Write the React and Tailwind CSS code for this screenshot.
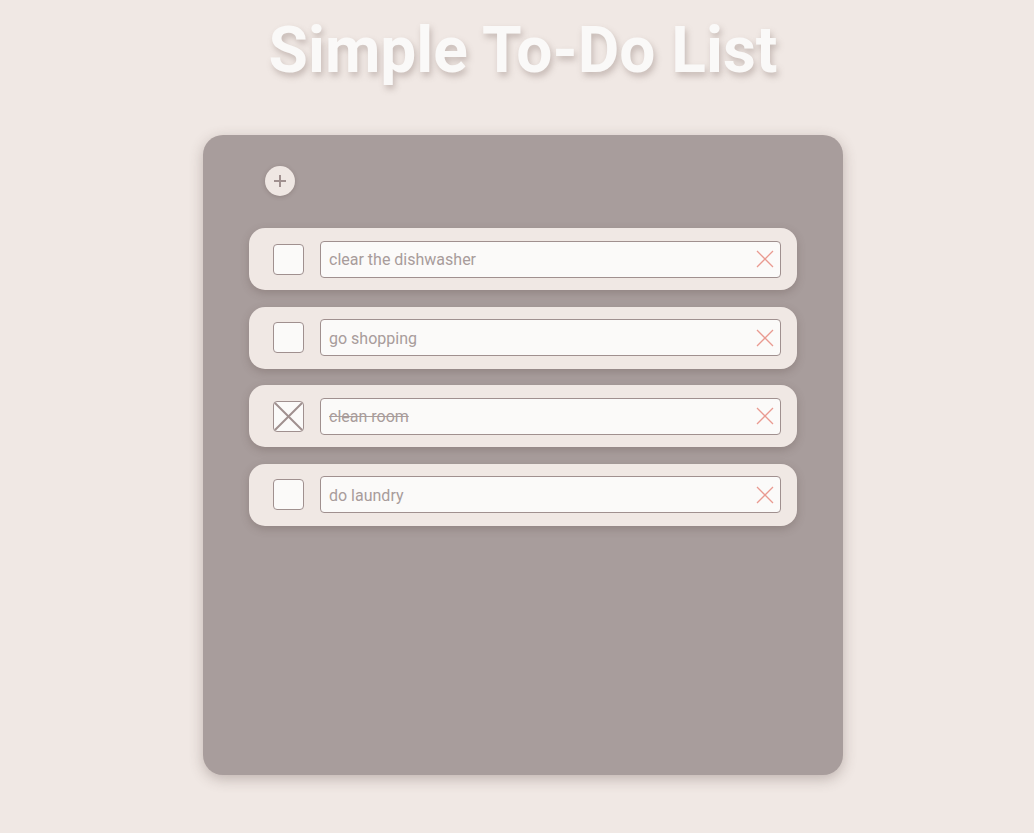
import React, { useState } from "react";

const initial = [
  { id: 1, text: "clear the dishwasher", done: false },
  { id: 2, text: "go shopping", done: false },
  { id: 3, text: "clean room", done: true },
  { id: 4, text: "do laundry", done: false },
];

function XIcon({ className }) {
  return (
    <svg viewBox="0 0 18 18" width="18" height="18" className={className}>
      <path d="M1 1L17 17M17 1L1 17" stroke="currentColor" strokeWidth="1.3" fill="none" />
    </svg>
  );
}

export default function App() {
  const [todos, setTodos] = useState(initial);
  const toggle = (id) => setTodos(todos.map((t) => (t.id === id ? { ...t, done: !t.done } : t)));
  const remove = (id) => setTodos(todos.filter((t) => t.id !== id));

  return (
    <div
      className="min-h-[833px] w-full bg-[#f0e8e4] pl-[12px] flex flex-col items-center"
      style={{ fontFamily: "Roboto, 'Noto Sans', sans-serif" }}
    >
      <h1 className="mt-[19px] text-[64px] leading-none font-bold text-[#faf9f8] [text-shadow:2px_4px_6px_rgba(120,100,95,0.35)]">
        Simple To-Do List
      </h1>
      <div className="mt-[52px] w-[640px] h-[640px] rounded-[20px] bg-[#a89d9c] shadow-[0_4px_14px_rgba(80,60,55,0.3)] px-[46px] pt-[31px]">
        <button className="ml-[16px] w-[30px] h-[30px] rounded-full bg-[#efe7e3] text-[#a0908f] flex items-center justify-center shadow-[0_1px_4px_rgba(80,60,55,0.25)]">
          <svg viewBox="0 0 14 14" width="14" height="14">
            <path d="M7 1V13M1 7H13" stroke="currentColor" strokeWidth="2" fill="none" />
          </svg>
        </button>
        <div className="mt-[32px] flex flex-col gap-[16.5px]">
          {todos.map((t) => (
            <div
              key={t.id}
              className="h-[62px] rounded-[16px] bg-[#f0e8e4] flex items-center pl-[24px] pr-[16px] gap-[16px] shadow-[0_3px_8px_rgba(80,60,55,0.25)]"
            >
              <button
                onClick={() => toggle(t.id)}
                className="relative w-[31px] h-[31px] shrink-0 rounded-[4px] border border-[#a0908f] bg-[#fbfaf9] text-[#a0908f] overflow-hidden"
              >
                {t.done && (
                  <svg viewBox="0 0 31 31" width="31" height="31" className="absolute -left-px -top-px">
                    <path d="M1 1L30 30M30 1L1 30" stroke="currentColor" strokeWidth="2" fill="none" />
                  </svg>
                )}
              </button>
              <div className="flex-1 h-[37px] rounded-[4px] border border-[#a0908f] bg-[#fbfaf9] flex items-center pl-[8px] pr-[6px]">
                <span
                  className={
                    "flex-1 pt-[2px] text-[16px] text-[#a89c9b] " + (t.done ? "line-through" : "")
                  }
                >
                  {t.text}
                </span>
                <button onClick={() => remove(t.id)} className="text-[#e99a90] w-[18px] h-[18px]">
                  <XIcon />
                </button>
              </div>
            </div>
          ))}
        </div>
      </div>
    </div>
  );
}
